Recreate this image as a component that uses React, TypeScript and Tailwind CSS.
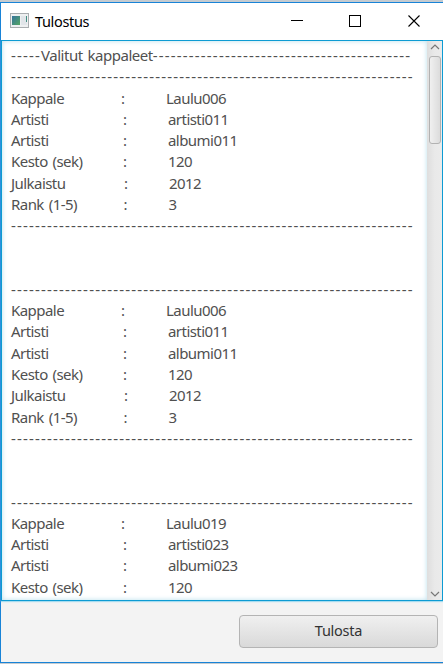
type Row = { label: string; colon: string; value: string };

const RULE = '-'.repeat(67);

function makeRecord(title: string, artist: string, album: string): Row[] {
  return [
    { label: 'Kappale', colon: 'pl-[110px]', value: title },
    { label: 'Artisti', colon: 'pl-[112px]', value: artist },
    { label: 'Artisti', colon: 'pl-[112px]', value: album },
    { label: 'Kesto (sek)', colon: 'pl-[112px]', value: '120' },
    { label: 'Julkaistu', colon: 'pl-[113px]', value: '2012' },
    { label: 'Rank (1-5)', colon: 'pl-[112.5px]', value: '3' },
  ];
}

function Dashes({ text }: { text: string }) {
  return <span className="tracking-[1.18px]">{text}</span>;
}

function Rule() {
  return (
    <div className="h-[21.27px]">
      <Dashes text={RULE} />
    </div>
  );
}

function Gap() {
  return <div className="h-[21.27px]" />;
}

function Record({ rows }: { rows: Row[] }) {
  return (
    <>
      {rows.map((row, i) => (
        <div key={i} className="grid h-[21.27px] grid-cols-1">
          <span className="col-start-1 row-start-1">{row.label}</span>
          <span className={`col-start-1 row-start-1 ${row.colon}`}>
            <span className="inline-block w-[45px]">:</span>
            {row.value}
          </span>
        </div>
      ))}
    </>
  );
}

function TitleBar() {
  return (
    <div className="flex h-[37px] items-center bg-white pr-[22px] pb-px pl-[9px]">
      <svg width="19" height="16" viewBox="0 0 19 16">
        <defs>
          <linearGradient id="pane" x1="0" y1="0" x2="1" y2="1">
            <stop offset="0" stopColor="#35749c" />
            <stop offset="1" stopColor="#54a663" />
          </linearGradient>
        </defs>
        <rect x="0.5" y="0.5" width="18" height="14" fill="#eef0f1" stroke="#a9adb0" />
        <rect x="2" y="3" width="8" height="9" fill="url(#pane)" />
        <rect x="11" y="3" width="6" height="9" fill="#e1e5e9" />
        <path d="M16.5 3v6" stroke="#438e83" />
      </svg>
      <span className="ml-[6px] pt-px text-[14.5px] tracking-[-0.35px] text-black">Tulostus</span>
      <svg className="ml-auto" width="130" height="14" viewBox="0 0 130 14" fill="none" stroke="#000">
        <path d="M0 6.5h12" />
        <rect x="58.5" y="1.5" width="11" height="11" />
        <path d="M117.5 1.5l11 11M128.5 1.5l-11 11" strokeWidth="1.1" />
      </svg>
    </div>
  );
}

function ScrollBar() {
  return (
    <div className="flex w-[15px] flex-col items-center bg-gradient-to-r from-[#dedede] via-[#e9e9e9] to-[#ebebeb]">
      <svg className="mt-[3px]" width="10" height="6" viewBox="0 0 10 6" fill="none" stroke="#777" strokeWidth="1.2">
        <path d="M1 5l4-4 4 4" />
      </svg>
      <div className="mt-[6px] h-[88px] w-[12px] rounded-[3px] border border-[#b2b2b2] bg-gradient-to-r from-[#f0f0f0] to-[#dcdcdc]" />
      <svg className="mt-auto mb-[3px]" width="10" height="6" viewBox="0 0 10 6" fill="none" stroke="#777" strokeWidth="1.2">
        <path d="M1 1l4 4 4-4" />
      </svg>
    </div>
  );
}

export default function App() {
  return (
    <div className="flex h-[664px] w-[443px] flex-col overflow-hidden bg-[#c5cbd0] pt-[2px] pb-px font-['Noto_Sans',sans-serif]">
      <div className="flex min-h-0 flex-1 flex-col border-y border-l border-[#1883d7] bg-[#f3f3f3]">
        <TitleBar />
        <div className="flex h-[561px] border border-[#0d9bd3] bg-white shadow-[0_1px_1px_#a8dcef]">
          <div className="flex-1 overflow-hidden pt-[4px] pl-[9px] text-[15px] leading-[21.27px] tracking-[-0.55px] whitespace-pre text-[#505050] shadow-[inset_0_0_5px_#b8dfec] [word-spacing:1.5px]">
            <div className="h-[21.27px]">
              <Dashes text="-----" />
              <span className="tracking-[-0.48px]">Valitut kappaleet</span>
              <Dashes text={'-'.repeat(43)} />
            </div>
            <Rule />
            <Record rows={makeRecord('Laulu006', 'artisti011', 'albumi011')} />
            <Rule />
            <Gap />
            <Gap />
            <Rule />
            <Record rows={makeRecord('Laulu006', 'artisti011', 'albumi011')} />
            <Rule />
            <Gap />
            <Gap />
            <Rule />
            <Record rows={makeRecord('Laulu019', 'artisti023', 'albumi023').slice(0, 4)} />
          </div>
          <ScrollBar />
        </div>
        <div className="flex flex-1 items-start justify-end pt-[14px] pr-[5px]">
          <button className="h-[33px] w-[199px] rounded-[4px] border border-[#b4b4b4] bg-gradient-to-b from-[#f0f0f0] to-[#d9d9d9] pb-px text-[14.5px] tracking-[-0.25px] text-[#333]">
            Tulosta
          </button>
        </div>
      </div>
    </div>
  );
}
